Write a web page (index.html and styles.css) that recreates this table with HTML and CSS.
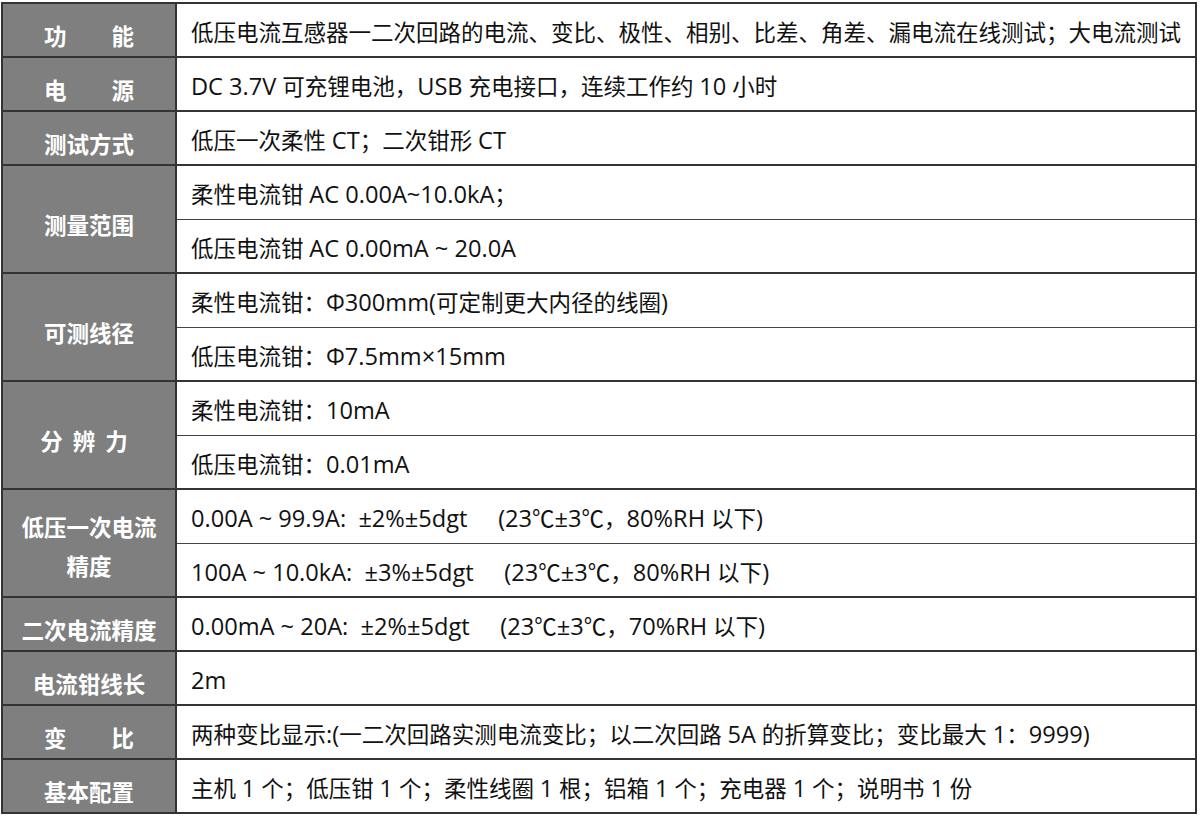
FILE: index.html
```html
<!DOCTYPE html>
<html lang="zh-CN">
<head>
<meta charset="utf-8">
<title>参数表</title>
<link rel="stylesheet" href="styles.css">
</head>
<body>
<div class="wrap">
<table class="spec">
  <colgroup><col class="c-label"><col class="c-value"></colgroup>
  <tr>
    <th class="lbl"><span class="just">功 能</span></th>
    <td class="val">低压电流互感器一二次回路的电流、变比、极性、相别、比差、角差、漏电流在线测试；大电流测试</td>
  </tr>
  <tr>
    <th class="lbl"><span class="just">电 源</span></th>
    <td class="val"><span class="en">DC 3.7V</span> 可充锂电池，<span class="en">USB</span> 充电接口，连续工作约 <span class="en">10</span> 小时</td>
  </tr>
  <tr>
    <th class="lbl">测试方式</th>
    <td class="val">低压一次柔性 <span class="en">CT</span>；二次钳形 <span class="en">CT</span></td>
  </tr>
  <tr>
    <th class="lbl" rowspan="2">测量范围</th>
    <td class="val sub-a">柔性电流钳 <span class="en">AC 0.00A~10.0kA</span>；</td>
  </tr>
  <tr>
    <td class="val sub-b">低压电流钳 <span class="en">AC 0.00mA ~ 20.0A</span></td>
  </tr>
  <tr>
    <th class="lbl" rowspan="2">可测线径</th>
    <td class="val sub-a">柔性电流钳：<span class="en">Φ300mm(</span>可定制更大内径的线圈<span class="en">)</span></td>
  </tr>
  <tr>
    <td class="val sub-b">低压电流钳：<span class="en">Φ7.5mm×15mm</span></td>
  </tr>
  <tr>
    <th class="lbl" rowspan="2"><span class="spaced">分辨力</span></th>
    <td class="val sub-a">柔性电流钳：<span class="en">10mA</span></td>
  </tr>
  <tr>
    <td class="val sub-b">低压电流钳：<span class="en">0.01mA</span></td>
  </tr>
  <tr>
    <th class="lbl two" rowspan="2">低压一次电流<br>精度</th>
    <td class="val sub-a"><span class="en">0.00A ~ 99.9A:&nbsp; ±2%±5dgt&nbsp;&nbsp;&nbsp;&nbsp; (23</span>℃<span class="en">±3</span>℃，<span class="en">80%RH</span> 以下<span class="en">)</span></td>
  </tr>
  <tr>
    <td class="val sub-b"><span class="en">100A ~ 10.0kA:&nbsp; ±3%±5dgt&nbsp;&nbsp;&nbsp;&nbsp; (23</span>℃<span class="en">±3</span>℃，<span class="en">80%RH</span> 以下<span class="en">)</span></td>
  </tr>
  <tr>
    <th class="lbl">二次电流精度</th>
    <td class="val"><span class="en">0.00mA ~ 20A:&nbsp; ±2%±5dgt&nbsp;&nbsp;&nbsp;&nbsp; (23</span>℃<span class="en">±3</span>℃，<span class="en">70%RH</span> 以下<span class="en">)</span></td>
  </tr>
  <tr>
    <th class="lbl">电流钳线长</th>
    <td class="val"><span class="en">2m</span></td>
  </tr>
  <tr>
    <th class="lbl"><span class="just">变 比</span></th>
    <td class="val">两种变比显示<span class="en">:(</span>一二次回路实测电流变比；以二次回路 <span class="en">5A</span> 的折算变比；变比最大 <span class="en">1</span>：<span class="en">9999)</span></td>
  </tr>
  <tr>
    <th class="lbl">基本配置</th>
    <td class="val">主机 <span class="en">1</span> 个；低压钳 <span class="en">1</span> 个；柔性线圈 <span class="en">1</span> 根；铝箱 <span class="en">1</span> 个；充电器 <span class="en">1</span> 个；说明书 <span class="en">1</span> 份</td>
  </tr>
</table>
</div>
</body>
</html>
```
FILE: styles.css
```css
html, body {
  margin: 0;
  padding: 0;
  background: #ffffff;
}

.wrap {
  padding: 2px 3px 0 1px;
}

.spec {
  width: 1196px;
  border-collapse: collapse;
  table-layout: fixed;
  border: 2px solid #333333;
  font-family: "Open Sans", "Noto Sans CJK SC", sans-serif;
  font-size: 22.5px;
}

.c-label { width: 174px; }

.spec th,
.spec td {
  height: 54px;
  padding: 0;
  border: 2px solid #333333;
  line-height: 1.2;
}

.lbl {
  background: #7f7f7f;
  color: #ffffff;
  font-family: "Noto Sans CJK SC", sans-serif;
  font-weight: 700;
  text-align: center;
  vertical-align: middle;
  padding-top: 10px !important;
  box-sizing: border-box;
}

.lbl.two {
  line-height: 39px;
  padding-top: 5px !important;
}

.just {
  display: inline-block;
  width: 90px;
  text-align: justify;
  text-align-last: justify;
}

.spaced {
  letter-spacing: 10px;
}

.val {
  color: #111111;
  text-align: left;
  vertical-align: middle;
  padding-left: 14px !important;
  padding-top: 4px !important;
  white-space: nowrap;
  box-sizing: border-box;
}

.en {
  font-size: 23.6px;
}

.spec td.sub-a {
  border-bottom: 1px solid #444444;
}

.spec td.sub-b {
  border-top: 1px solid #444444;
}
```
